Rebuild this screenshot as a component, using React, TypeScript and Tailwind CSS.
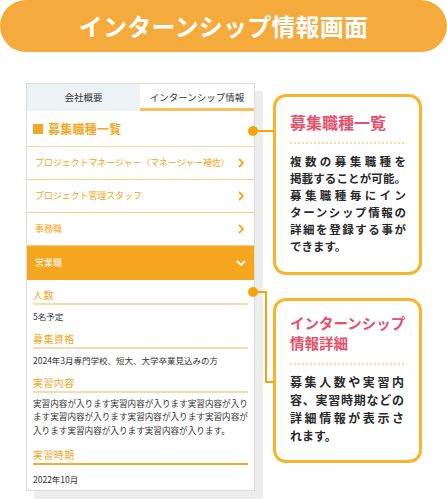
import React from 'react';

const FONT = { fontFamily: '"Noto Sans CJK JP", "Noto Sans", sans-serif' };

function ChevronRight() {
  return (
    <svg width="7" height="10" viewBox="0 0 7 10" className="shrink-0">
      <path d="M1.5 1.5 L5 5 L1.5 8.5" fill="none" stroke="#f5a623" strokeWidth="1.8" strokeLinecap="round" strokeLinejoin="round" />
    </svg>
  );
}

function ChevronDown() {
  return (
    <svg width="10" height="7" viewBox="0 0 10 7" className="shrink-0">
      <path d="M1.5 1.5 L5 5 L8.5 1.5" fill="none" stroke="#ffffff" strokeWidth="1.8" strokeLinecap="round" strokeLinejoin="round" />
    </svg>
  );
}

const jobs = ['プロジェクトマネージャー（マネージャー補佐）', 'プロジェクト管理スタッフ', '事務職'];

function Label({ children, dark }: { children: React.ReactNode; dark?: boolean }) {
  return (
    <div
      className={`text-[10px] leading-[14px] text-[#f5a623] pb-[1px] border-b-2 tracking-[0.04em] ${dark ? 'border-[#f3ab35]' : 'border-[#fcd9a6]'}`}
    >
      {children}
    </div>
  );
}

function Justified({ lines, className }: { lines: string[]; className: string }) {
  return (
    <div className={className}>
      {lines.map((l, i) => (
        <div
          key={i}
          className={i < lines.length - 1 ? 'text-justify [text-align-last:justify] [text-justify:inter-character]' : ''}
        >
          {l}
        </div>
      ))}
    </div>
  );
}

export default function App() {
  return (
    <div className="w-[447px] h-[500px] bg-white relative overflow-hidden" style={FONT}>
      {/* Header */}
      <div className="h-[52px] rounded-full bg-[#f5ab3c] flex items-center justify-center">
        <span className="text-white text-[24px] font-bold leading-none tracking-[0.01em]">インターンシップ情報画面</span>
      </div>

      <div className="flex mt-[31px]">
        {/* Phone panel */}
        <div className="ml-[26px] w-[229px] h-[408px] bg-white border border-[#dcdcdc] shadow-[8px_8px_0_0_#ededed] flex flex-col">
          {/* Tabs */}
          <div className="flex h-[27px]">
            <div className="w-[113px] bg-[#edf3f5] flex items-center justify-center text-[9.5px] text-[#333]">会社概要</div>
            <div className="flex-1 flex items-center justify-center text-[9.5px] text-[#333] border-b-[3px] border-[#f8bd5c] pt-[2px]">
              インターンシップ情報
            </div>
          </div>

          {/* Section heading */}
          <div className="h-[36px] flex items-center px-[6px] border-b border-[#fbd69a]">
            <span className="w-[10px] h-[10px] bg-[#f5a623] mr-[5px]" />
            <span className="text-[12px] font-bold text-[#f5a623] tracking-[0.02em]">募集職種一覧</span>
          </div>

          {jobs.map((j) => (
            <div key={j} className="h-[33px] flex items-center justify-between pl-[8px] pr-[9px] border-b border-[#f9cd80]">
              <span className="text-[9px] text-[#f5a623] tracking-[-0.01em]">{j}</span>
              <ChevronRight />
            </div>
          ))}

          <div className="h-[34px] flex items-center justify-between pl-[8px] pr-[8px] bg-[#f5a51e]">
            <span className="text-[9px] text-white">営業職</span>
            <ChevronDown />
          </div>

          {/* Details */}
          <div className="px-[6px] pt-[8px] text-[#333]">
            <Label>人数</Label>
            <div className="mt-[5px] text-[8.5px] leading-[12px]">5名予定</div>

            <div className="mt-[9.5px]">
              <Label>募集資格</Label>
            </div>
            <div className="mt-[5.5px] text-[8.5px] leading-[12px]">2024年3月専門学校、短大、大学卒業見込みの方</div>

            <div className="mt-[10px]">
              <Label>実習内容</Label>
            </div>
            <div className="mt-[3.5px] text-[8.6px] leading-[13.5px]">
              実習内容が入ります実習内容が入ります実習内容が入ります実習内容が入ります実習内容が入ります実習内容が入ります実習内容が入ります実習内容が入ります。
            </div>

            <div className="mt-[10.5px]">
              <Label dark>実習時期</Label>
            </div>
            <div className="mt-[8px] text-[8.5px] leading-[12px]">2022年10月</div>
          </div>
        </div>

        {/* Callouts */}
        <div className="ml-[18px] flex flex-col">
          <div className="mt-[11px] w-[149px] h-[181px] border-[3px] border-[#f7b52c] rounded-[13px] bg-white pl-[14px] pr-[15px] pt-[15px]">
            <div className="text-[16px] leading-[20px] font-bold text-[#e8506a]">募集職種一覧</div>
            <div className="mt-[10px] border-t-2 border-dotted border-[#fbd99c]" />
            <Justified
              className="mt-[9px] w-[116px] text-[11.5px] leading-[17px] font-bold text-[#2a2a2a]"
              lines={['複数の募集職種を', '掲載することが可能。', '募集職種毎にイン', 'ターンシップ情報の', '詳細を登録する事が', 'できます。']}
            />
          </div>

          <div className="mt-[23px] w-[149px] h-[165px] border-[3px] border-[#f7b52c] rounded-[13px] bg-white pl-[14px] pr-[12px] pt-[12px]">
            <div className="text-[14.5px] leading-[20px] font-bold text-[#e8506a] whitespace-nowrap">
              インターンシップ
              <br />
              情報詳細
            </div>
            <div className="mt-[10px] mr-[3px] border-t-2 border-dotted border-[#fbd99c]" />
            <Justified
              className="mt-[8px] w-[114px] text-[12px] leading-[18px] font-bold text-[#2a2a2a]"
              lines={['募集人数や実習内', '容、実習時期などの', '詳細情報が表示さ', 'れます。']}
            />
          </div>
        </div>
      </div>

      {/* Connectors */}
      <div className="absolute left-[248px] top-[126px] w-[10px] h-[10px] rounded-full bg-[#f5a40a]" />
      <div className="absolute left-[253px] top-[130px] w-[21px] h-[2px] bg-[#f5a40a]" />

      <div className="absolute left-[248px] top-[287px] w-[10px] h-[10px] rounded-full bg-[#f5a40a]" />
      <div className="absolute left-[253px] top-[291px] w-[14px] h-[2px] bg-[#f5a40a]" />
      <div className="absolute left-[265px] top-[291px] w-[2px] h-[92px] bg-[#f5a40a]" />
      <div className="absolute left-[265px] top-[381px] w-[9px] h-[2px] bg-[#f5a40a]" />
    </div>
  );
}
